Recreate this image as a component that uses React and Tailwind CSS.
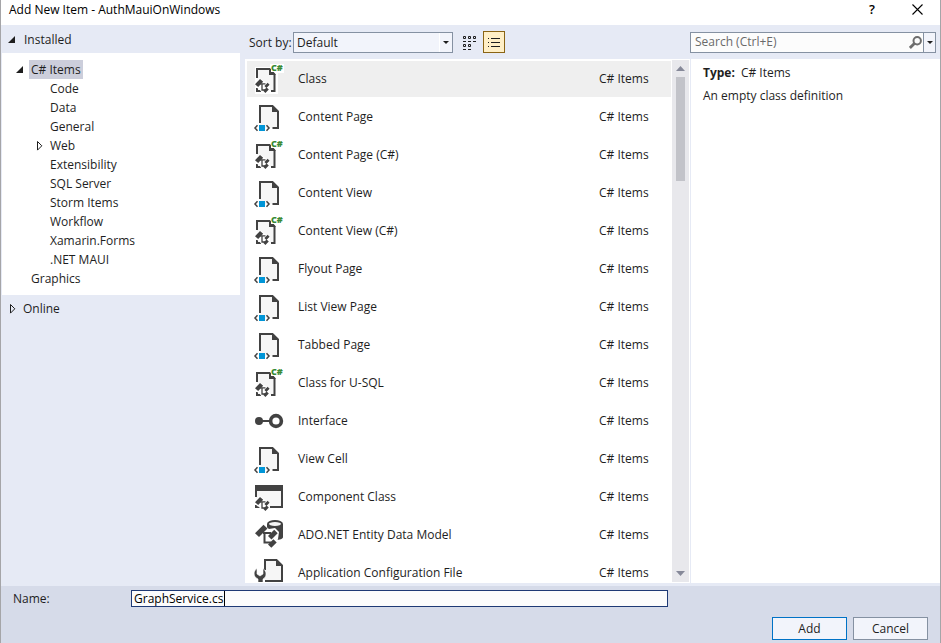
import React, { useState } from 'react';

const treeItems = [
    { label: 'Code' },
    { label: 'Data' },
    { label: 'General' },
    { label: 'Web', collapsed: true },
    { label: 'Extensibility' },
    { label: 'SQL Server' },
    { label: 'Storm Items' },
    { label: 'Workflow' },
    { label: 'Xamarin.Forms' },
    { label: '.NET MAUI' },
];

const templates = [
    { name: 'Class', icon: 'csharp' },
    { name: 'Content Page', icon: 'markup' },
    { name: 'Content Page (C#)', icon: 'csharp' },
    { name: 'Content View', icon: 'markup' },
    { name: 'Content View (C#)', icon: 'csharp' },
    { name: 'Flyout Page', icon: 'markup' },
    { name: 'List View Page', icon: 'markup' },
    { name: 'Tabbed Page', icon: 'markup' },
    { name: 'Class for U-SQL', icon: 'csharp' },
    { name: 'Interface', icon: 'interface' },
    { name: 'View Cell', icon: 'markup' },
    { name: 'Component Class', icon: 'component' },
    { name: 'ADO.NET Entity Data Model', icon: 'entity' },
    { name: 'Application Configuration File', icon: 'config' },
];

const Expanded = () => (
    <svg className="w-2 h-2" viewBox="0 0 8 8"><path d="M7 0v7H0z" fill="#1e1e1e" /></svg>
);

const Collapsed = () => (
    <svg className="w-2 h-3" viewBox="0 0 8 12"><path d="M1.5 1.5v8.6L5.8 5.8z" fill="none" stroke="#1e1e1e" /></svg>
);

const DownArrow = () => (
    <svg className="w-[6px] h-[3px]" viewBox="0 0 6 3"><path d="M0 0h6L3 3z" fill="#1e1e1e" /></svg>
);

// Three linked boxes, used as an overlay on the class icons
const ClassGlyph = () => (
    <g>
        <path d="M1 20.5L6 15l5 3 1 1 5 2v6l-3 4h-4l-4-5-2-1z" fill="#fff" />
        <path d="M2 21.2l5-5.2 3.2 2.8-5 5.2z" fill="#424242" />
        <path d="M7 20.8h5.5M9 21v6h3" fill="none" stroke="#424242" strokeWidth="1.3" />
        <path d="M11.4 23l3.2-3.2 2 2-3.2 3.2zM10.2 27.8l3.4-3.4 2.2 2.2-3.4 3.4z" fill="#424242" />
    </g>
);

const TemplateIcon = ({ type }) => {
    const renderShape = () => {
        switch (type) {
            case 'csharp': return (
                <>
                    <path d="M2 4h15V1h14v9h-6v21H2z" fill="#fff" />
                    <path d="M4 6h12l6 6v16H4z" fill="#f6f6f6" />
                    <path d="M4 15V6h12.5l5 5.5V28H18M4 25v3h4" fill="none" stroke="#424242" strokeWidth="2" />
                    <path d="M16 5v7h7z" fill="#424242" />
                    <path d="M18 2h9v7h-9z" fill="#fff" />
                    <ClassGlyph />
                    <text x="18" y="8" fontSize="9" fontWeight="800" fill="#388a34">C#</text>
                </>
            );
            case 'markup': return (
                <>
                    <path d="M7 5h12l6 6v16H7z" fill="#f6f6f6" />
                    <path d="M7 22V5h12.5l5.5 5.5V27h-5.5" fill="none" stroke="#424242" strokeWidth="2" />
                    <path d="M19 4v7h7z" fill="#424242" />
                    <path d="M6 24h6v6H6z" fill="#0095d7" />
                    <path d="M4.5 24.3L2 27l2.5 2.7M13.5 24.3L16 27l-2.5 2.7" fill="none" stroke="#424242" strokeWidth="1.5" />
                </>
            );
            case 'interface': return (
                <>
                    <circle cx="6" cy="16" r="4" fill="#424242" />
                    <path d="M8 16h9" stroke="#424242" strokeWidth="2" />
                    <circle cx="23" cy="16" r="5.4" fill="#fff" stroke="#424242" strokeWidth="3.6" />
                </>
            );
            case 'component': return (
                <>
                    <path d="M3 9h26v17H3z" fill="#f6f6f6" />
                    <path d="M3 16V9M29 9v17H17M3 24v2h4" fill="none" stroke="#424242" strokeWidth="2" />
                    <path d="M2 4h28v6H2z" fill="#424242" />
                    <ClassGlyph />
                </>
            );
            case 'entity': return (
                <>
                    <path d="M14 5v12l8 4c5 0 8-1 8-3V5z" fill="#424242" />
                    <ellipse cx="22" cy="5" rx="7" ry="3" fill="#f6f6f6" stroke="#424242" strokeWidth="2" />
                    <path d="M1 14L10 5l6 5 6-1 4 4-1 7-5 10h-4l-6-6v-5l-4-1z" fill="#fff" />
                    <path d="M2 14.2l8.5-8.4 4 3.8L6 18z" fill="#424242" />
                    <path d="M10 14h8M11.5 14v9.5H18" fill="none" stroke="#424242" strokeWidth="2" />
                    <path d="M15 17l6.2-6.2 3.5 3.4-6.2 6.2zM15 25.4l5.4-5.2 3.3 3.2-5.4 5.4z" fill="#424242" />
                </>
            );
            default: return (
                <>
                    <path d="M12 3h11l6 6v15H12z" fill="#f6f6f6" />
                    <path d="M12 13V3h11.5L29 8.5V24H12" fill="none" stroke="#424242" strokeWidth="2" />
                    <path d="M23 2v7h7z" fill="#424242" />
                    <path d="M4 11.5v5.5l3 2 3-2v-5.5c4 2.500 4 8.500 0 10.500v6H5v-6c-5-2-5-8-1-10.500z" fill="#424242" stroke="#fff" strokeWidth=".6" />
                </>
            );
        }
    };

    return <svg className="w-8 h-8 shrink-0 overflow-visible" viewBox="0 0 32 32" aria-hidden="true">{renderShape()}</svg>;
};

const TitleBar = () => (
    <header className="h-[25px] shrink-0 flex items-start justify-between bg-white pl-2 pr-[11px] text-black">
        <h1 className="leading-5">Add New Item - AuthMauiOnWindows</h1>
        <div className="flex">
            <button aria-label="Help" className="w-8 h-[18px] text-[13px] leading-[18px] font-semibold">?</button>
            <button aria-label="Close" className="w-6 h-[18px] ml-[17px] flex items-center justify-center">
                <svg className="w-[11px] h-[11px]" viewBox="0 0 11 11"><path d="M.5.5l10 10M10.5.5l-10 10" stroke="#000" strokeWidth="1.1" /></svg>
            </button>
        </div>
    </header>
);

const Sidebar = () => (
    <nav className="w-[244px] shrink-0 pl-px pr-[5px]">
        <button className="h-7 w-full flex items-center gap-2 pl-[6px] pt-px">
            <Expanded />
            Installed
        </button>
        <div className="bg-white py-[7px]">
            <button className="h-[19px] flex items-center pl-[14px]">
                <Expanded />
                <span className="h-[19px] leading-[19px] bg-[#cccedb] ml-[5px] px-[2px]">C# Items</span>
            </button>
            <ul>
                {treeItems.map(item => (
                    <li key={item.label}>
                        <button className="h-[19px] flex items-center pl-[34px]">
                            <span className="w-[14px]">{item.collapsed && <Collapsed />}</span>
                            {item.label}
                        </button>
                    </li>
                ))}
            </ul>
            <button className="h-[19px] flex items-center pl-[29px]">Graphics</button>
        </div>
        <button className="h-7 w-full flex items-center gap-[6px] pl-[7px]">
            <Collapsed />
            Online
        </button>
    </nav>
);

const Toolbar = () => (
    <div className="h-[34px] shrink-0 flex items-center pl-1">
        <label htmlFor="sort" className="w-11 whitespace-nowrap pt-px">Sort by:</label>
        <div className="relative w-[160px]">
            <select id="sort" className="appearance-none block w-full h-[21px] pl-[3px] border border-[#8591a2] bg-[#f2f4fb] leading-[19px]">
                <option>Default</option>
            </select>
            <span className="pointer-events-none absolute right-px top-px h-[19px] w-[13px] border-l border-white flex items-center justify-center">
                <DownArrow />
            </span>
        </div>
        <button aria-label="Small icons" className="w-[22px] h-[22px] ml-[6px] flex items-center justify-center">
            <svg className="w-[14px] h-[15px]" viewBox="0 0 14 15">
                <path d="M.5 1.5h2v2h-2zM5.5 1.5h2v2h-2zM10.5 1.5h2v2h-2zM.5 9.5h2v2h-2zM5.5 9.5h2v2h-2z" fill="none" stroke="#1e1e1e" />
                <path d="M0 6.5h3M5 6.5h3M10 6.5h3M0 14.5h3M5 14.5h3" stroke="#1e1e1e" />
            </svg>
        </button>
        <button aria-label="Medium icons" aria-pressed="true" className="w-[22px] h-[22px] ml-[2px] flex items-center justify-center border border-[#8a6414] bg-[#ffefc6]">
            <svg className="w-3 h-[11px]" viewBox="0 0 12 11">
                <path d="M0 1.5h1M3 1.5h9M0 5.5h1M3 5.5h9M0 9.5h1M3 9.5h9" stroke="#1e1e1e" />
            </svg>
        </button>
    </div>
);

const TemplateList = ({ selected, onSelect }) => (
    <div className="flex-1 min-h-0 flex bg-white">
        <ul className="flex-1 min-w-0 overflow-hidden pt-px pl-[2px] mb-px">
            {templates.map(t => (
                <li key={t.name} className="h-[38px] py-px">
                    <button
                        onClick={() => onSelect(t.name)}
                        className={`w-full h-9 flex items-center pl-[6px] text-left ${selected === t.name ? 'bg-[#efefef]' : ''}`}
                    >
                        <TemplateIcon type={t.icon} />
                        <span className="flex-1 pl-[13px] whitespace-nowrap">{t.name}</span>
                        <span className="w-[72px]">C# Items</span>
                    </button>
                </li>
            ))}
        </ul>
        {/* Scrollbar */}
        <div className="w-[17px] mx-px my-px shrink-0 bg-[#e8e8ec] flex flex-col items-center justify-between py-[6px]">
            <svg className="w-[9px] h-[5px] shrink-0" viewBox="0 0 9 5"><path d="M0 5h9L4.5 0z" fill="#868999" /></svg>
            <div className="flex-1 w-[9px] pt-[6px]">
                <div className="h-[21%] bg-[#c2c3c9]"></div>
            </div>
            <svg className="w-[9px] h-[5px] shrink-0" viewBox="0 0 9 5"><path d="M0 0h9L4.5 5z" fill="#868999" /></svg>
        </div>
    </div>
);

const Details = () => (
    <aside className="w-[250px] shrink-0 flex flex-col">
        <div className="h-[34px] shrink-0 flex items-center pr-1">
            <div className="flex-1 h-[21px] flex border border-[#8591a2] bg-[#fcfcfc]">
                <input
                    type="text"
                    aria-label="Search"
                    placeholder="Search (Ctrl+E)"
                    className="flex-1 min-w-0 pl-1 outline-none placeholder:text-[#6a6a6a]"
                />
                <button aria-label="Search" className="w-4 flex items-center justify-center">
                    <svg className="w-[13px] h-[13px]" viewBox="0 0 13 13">
                        <circle cx="8.2" cy="4.8" r="3.7" fill="none" stroke="#6e6e6e" strokeWidth="2" />
                        <path d="M5.4 7.4L.9 11.9" stroke="#6e6e6e" strokeWidth="2.8" />
                    </svg>
                </button>
                <button aria-label="Search options" className="w-3 flex items-center justify-center border-l border-[#8591a2] bg-[#f2f4fb]">
                    <DownArrow />
                </button>
            </div>
        </div>
        <div className="flex-1 bg-white ml-px pl-3 pt-1">
            <p className="leading-5"><b className="mr-[6px]">Type:</b>C# Items</p>
            <p className="leading-5 mt-[3px]">An empty class definition</p>
        </div>
    </aside>
);

const Footer = () => {
    const [name, setName] = useState('GraphService.cs');

    return (
        <footer className="shrink-0 bg-[#d6dbe9] pt-1 pb-[3px] pr-3">
            <div className="flex items-center h-[17px]">
                <label htmlFor="name" className="w-[130px] pl-3">Name:</label>
                <div className="relative flex-1 h-[17px]">
                    <input
                        id="name"
                        type="text"
                        value={name}
                        onChange={e => setName(e.target.value)}
                        className="peer block w-full h-[17px] pl-[2px] border border-[#1f3a75] bg-[#fcfcfc] text-black outline-none"
                    />
                    {/* Caret */}
                    <span className="absolute left-[93px] top-px w-px h-[15px] bg-black peer-focus:hidden"></span>
                </div>
                <div className="w-[260px]"></div>
            </div>
            <div className="flex justify-end gap-[6px] mt-[10px]">
                <button className="w-[75px] h-[23px] border border-[#0072c6] bg-[#f2f4fb]">Add</button>
                <button className="w-[75px] h-[23px] border border-[#8591a2] bg-[#f2f4fb]">Cancel</button>
            </div>
        </footer>
    );
};

const App = () => {
    const [selected, setSelected] = useState('Class');

    return (
        <div className="h-screen flex flex-col border-l border-r border-[#a5a5a8] bg-[#e6eaf5] font-['Open_Sans',sans-serif] text-[12px] text-[#1e1e1e]">
            <TitleBar />
            <main className="flex-1 min-h-0 flex pb-[3px]">
                <Sidebar />
                <section className="flex-1 min-w-0 flex flex-col">
                    <Toolbar />
                    <TemplateList selected={selected} onSelect={setSelected} />
                </section>
                <Details />
            </main>
            <Footer />
        </div>
    );
};

export default App;
